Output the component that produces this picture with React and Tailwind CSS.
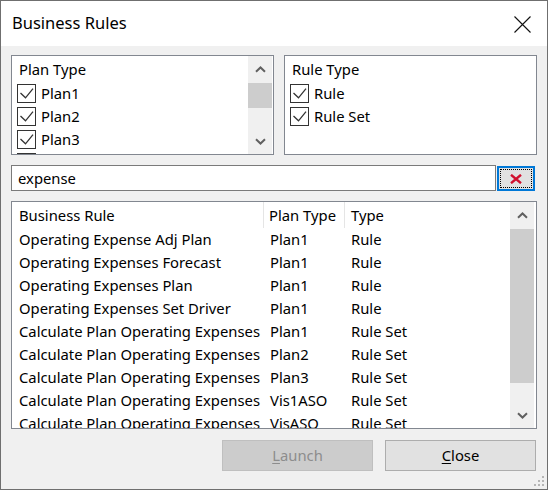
import React from 'react';

const FONT = { fontFamily: "'Segoe UI', 'Noto Sans', 'Open Sans', sans-serif" };

function Chevron({ down }) {
  return (
    <svg width="11" height="7" viewBox="0 0 11 7" fill="none">
      <path d={down ? 'M1 1.2 L5.5 5.5 L10 1.2' : 'M1 5.8 L5.5 1.5 L10 5.8'} stroke="#606060" strokeWidth="2" />
    </svg>
  );
}

function Check() {
  return (
    <div className="w-[19px] h-[19px] border border-[#333] bg-white flex-shrink-0">
      <svg width="17" height="17" viewBox="0 0 17 17" fill="none">
        <path d="M2.5 8 L7.5 12.8 L15 3.6" stroke="#333" strokeWidth="1.3" />
      </svg>
    </div>
  );
}

function CheckRow({ label }) {
  return (
    <div className="h-[23px] flex items-center gap-[5px] pl-[5px]">
      <Check />
      <span>{label}</span>
    </div>
  );
}

function ScrollBar({ upH, thumbTop, thumbH, downH }) {
  return (
    <div className="w-[24px] h-full bg-[#f0f0f0] flex flex-col flex-shrink-0">
      <div className="flex items-center justify-center flex-shrink-0" style={{ height: upH }}>
        <Chevron />
      </div>
      <div className="flex-1 relative">
        <div className="absolute left-0 right-0 bg-[#cdcdcd]" style={{ top: thumbTop, height: thumbH }} />
      </div>
      <div className="flex items-center justify-center flex-shrink-0" style={{ height: downH }}>
        <Chevron down />
      </div>
    </div>
  );
}

const rules = [
  ['Operating Expense Adj Plan', 'Plan1', 'Rule'],
  ['Operating Expenses Forecast', 'Plan1', 'Rule'],
  ['Operating Expenses Plan', 'Plan1', 'Rule'],
  ['Operating Expenses Set Driver', 'Plan1', 'Rule'],
  ['Calculate Plan Operating Expenses', 'Plan1', 'Rule Set'],
  ['Calculate Plan Operating Expenses', 'Plan2', 'Rule Set'],
  ['Calculate Plan Operating Expenses', 'Plan3', 'Rule Set'],
  ['Calculate Plan Operating Expenses', 'Vis1ASO', 'Rule Set'],
  ['Calculate Plan Operating Expenses', 'VisASO', 'Rule Set'],
];

export default function App() {
  return (
    <div className="w-[548px] h-[490px] border border-[#6f6f6f] bg-[#f0f0f0] flex flex-col relative overflow-hidden text-black text-[14.8px]" style={FONT}>
      {/* title bar */}
      <div className="h-[45px] bg-white flex items-center justify-between pl-[11px] pr-[16px] flex-shrink-0">
        <span className="text-[16.5px] mt-[-1px]">Business Rules</span>
        <svg width="17" height="17" viewBox="0 0 17 17" fill="none" className="mt-[1px]">
          <path d="M0.5 0.5 L16.5 16.5 M16.5 0.5 L0.5 16.5" stroke="#111" strokeWidth="1.1" />
        </svg>
      </div>

      <div className="flex flex-col px-[10px] pt-[9px]">
        {/* filter panels */}
        <div className="flex gap-[10px] h-[100px]">
          <div className="w-[263px] h-full border border-[#828790] bg-white flex pr-[1px]">
            <div className="flex-1 overflow-hidden pt-[1px]">
              <div className="h-[25px] flex items-center pl-[7px]">Plan Type</div>
              <CheckRow label="Plan1" />
              <CheckRow label="Plan2" />
              <CheckRow label="Plan3" />
              <CheckRow label="Vis1ASO" />
            </div>
            <ScrollBar upH={27} thumbTop={0} thumbH={25} downH={25} />
          </div>
          <div className="w-[253px] h-full border border-[#828790] bg-white pt-[1px]">
            <div className="h-[25px] flex items-center pl-[7px]">Rule Type</div>
            <CheckRow label="Rule" />
            <CheckRow label="Rule Set" />
          </div>
        </div>

        {/* search */}
        <div className="flex items-start mt-[10px] h-[26px]">
          <div className="w-[485px] h-[26px] border border-[#7a7a7a] bg-white flex items-center pl-[6px]">
            expense
          </div>
          <button className="ml-[1px] mt-[1px] w-[38px] h-[25px] border-2 border-[#0078d7] bg-[#e1e1e1] p-[1px]">
            <div className="w-full h-full border border-dotted border-black flex items-center justify-center">
              <svg width="12" height="10" viewBox="0 0 12 10" fill="none">
                <path d="M1 0.8 L11 9.2 M11 0.8 L1 9.2" stroke="#d0102e" strokeWidth="2.4" />
              </svg>
            </div>
          </button>
        </div>

        {/* rules list */}
        <div className="mt-[10px] h-[228px] border border-[#828790] bg-white flex pr-[2px]">
          <div className="flex-1 overflow-hidden">
            <div className="h-[26px] grid grid-cols-[252px_81px_1fr] items-center">
              <div className="pl-[7px] h-full flex items-center border-r border-[#e5e5e5]">Business Rule</div>
              <div className="pl-[5px] h-full flex items-center border-r border-[#e5e5e5]">Plan Type</div>
              <div className="pl-[6px]">Type</div>
            </div>
            {rules.map((r, i) => (
              <div key={i} className="h-[23px] grid grid-cols-[252px_81px_1fr] items-center whitespace-nowrap">
                <div className="pl-[7px] overflow-hidden">{r[0]}</div>
                <div className="pl-[6px]">{r[1]}</div>
                <div className="pl-[6px]">{r[2]}</div>
              </div>
            ))}
          </div>
          <ScrollBar upH={27} thumbTop={0} thumbH={154} downH={26} />
        </div>

        {/* buttons */}
        <div className="mt-[11px] flex justify-end gap-[12px] pr-[1px]">
          <button className="w-[151px] h-[31px] border border-[#bfbfbf] bg-[#cccccc] text-[#8d8d8d]">
            <span className="underline underline-offset-2">L</span>aunch
          </button>
          <button className="w-[151px] h-[31px] border border-[#adadad] bg-[#e1e1e1]">
            <span className="underline underline-offset-2">C</span>lose
          </button>
        </div>
      </div>

      {/* resize grip */}
      <svg width="14" height="14" viewBox="0 0 14 14" className="absolute right-[1px] bottom-[1px]">
        {[[10, 2], [6, 6], [10, 6], [2, 10], [6, 10], [10, 10]].map(([x, y], i) => (
          <rect key={i} x={x} y={y} width="2" height="2" fill="#b5b5b5" />
        ))}
      </svg>
    </div>
  );
}
